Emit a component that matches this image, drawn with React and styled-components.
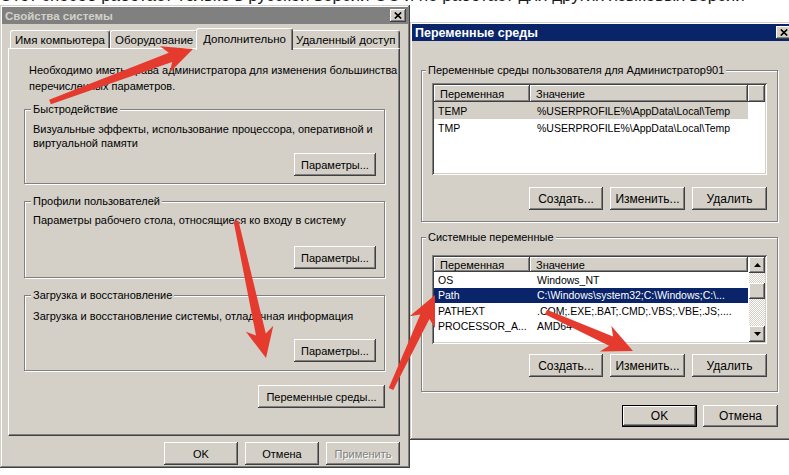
import React from 'react';
import styled, { createGlobalStyle, css } from 'styled-components';

const FACE = '#d4d0c8';

const GlobalStyle = createGlobalStyle`
  html, body { margin: 0; padding: 0; background: #fff; }
  body {
    font-family: "Liberation Sans", Arial, sans-serif;
    font-size: 11px;
    color: #000;
  }
  * { box-sizing: border-box; }
`;

const raised = css`
  box-shadow: inset -1px -1px #404040, inset 1px 1px #fff,
    inset -2px -2px #808080, inset 2px 2px ${FACE};
`;

const sunken = css`
  box-shadow: inset 1px 1px #808080, inset -1px -1px #fff,
    inset 2px 2px #404040, inset -2px -2px ${FACE};
`;

const Desktop = styled.div`
  position: relative;
  width: 789px;
  height: 475px;
  overflow: hidden;
  background: #fff;
`;

const Caption = styled.div`
  position: absolute;
  left: 0;
  top: -14px;
  font-size: 17px;
  line-height: 20px;
  white-space: nowrap;
  color: #1a1a1a;
`;

const Window = styled.div`
  position: absolute;
  z-index: ${(p) => p.$z};
  left: ${(p) => p.$x}px;
  top: ${(p) => p.$y}px;
  width: ${(p) => p.$w}px;
  height: ${(p) => p.$h}px;
  background: ${FACE};
  padding: 2px;
  display: flex;
  flex-direction: column;
  font-size: ${(p) => p.$fs}px;
  box-shadow: inset -1px -1px #404040, inset 1px 1px ${FACE},
    inset -2px -2px #808080, inset 2px 2px #fff;
`;

const TitleBar = styled.div`
  height: 17px;
  flex-shrink: 0;
  display: flex;
  align-items: center;
  justify-content: space-between;
  padding: 0 2px 0 3px;
  background: ${(p) => (p.$active ? '#0a246a' : '#808080')};
  color: ${(p) => (p.$active ? '#fff' : FACE)};
  font-weight: bold;
  font-size: ${(p) => (p.$active ? 12.5 : 11.5)}px;
  white-space: nowrap;
`;

const CloseBtn = styled.div`
  width: 16px;
  height: 13px;
  background: ${FACE};
  display: flex;
  align-items: center;
  justify-content: center;
  ${raised};
`;

const CloseIcon = () => (
  <svg width="8" height="7" viewBox="0 0 8 7">
    <path d="M0.8 0.5 L7.2 6.5 M7.2 0.5 L0.8 6.5" stroke="#000" strokeWidth="1.7" />
  </svg>
);

const WinBody = styled.div`
  flex: 1;
  display: flex;
  flex-direction: column;
  padding: ${(p) => p.$pad};
`;

/* ---------- tabs ---------- */

const TabRow = styled.div`
  display: flex;
  align-items: flex-end;
  height: 20px;
  padding-left: 2px;
  position: relative;
  z-index: 1;
`;

const Tab = styled.div`
  height: ${(p) => (p.$active ? 22 : 18)}px;
  margin: 0 ${(p) => (p.$active ? -2 : 0)}px ${(p) => (p.$active ? -2 : 0)}px;
  padding: ${(p) => (p.$active ? '3px 6px 0' : '2px 4px 0')};
  background: ${FACE};
  border-top: 1px solid #fff;
  border-left: 1px solid #fff;
  border-right: 1px solid #404040;
  box-shadow: inset -1px 0 #808080;
  border-radius: 3px 3px 0 0;
  font-size: 11.5px;
  line-height: 15px;
  white-space: nowrap;
  position: relative;
  z-index: ${(p) => (p.$active ? 2 : 1)};
`;

const TabPanel = styled.div`
  height: 388px;
  flex-shrink: 0;
  background: ${FACE};
  border-top: 1px solid #fff;
  border-left: 1px solid #fff;
  border-right: 1px solid #404040;
  border-bottom: 1px solid #404040;
  box-shadow: inset -1px -1px #808080;
  padding: 13px 14px 0 15px;
  display: flex;
  flex-direction: column;
`;

const Intro = styled.p`
  margin: 0 0 0 5px;
  line-height: 16px;
  white-space: nowrap;
`;

/* ---------- group boxes ---------- */

const Group = styled.div`
  position: relative;
  height: ${(p) => p.$h}px;
  margin-top: ${(p) => p.$mt}px;
  border: 1px solid #808080;
  box-shadow: inset 1px 1px #fff, 1px 1px #fff;
  padding: ${(p) => p.$pad};
  display: flex;
  flex-direction: column;
  flex-shrink: 0;
`;

const Legend = styled.span`
  position: absolute;
  top: -8px;
  left: ${(p) => p.$left || 6}px;
  padding: 0 2px;
  background: ${FACE};
  line-height: 14px;
  white-space: nowrap;
`;

const GroupText = styled.p`
  margin: 0;
  line-height: 14px;
  white-space: nowrap;
`;

const ButtonRow = styled.div`
  display: flex;
  justify-content: flex-end;
  gap: ${(p) => p.$gap || 7}px;
  margin-top: ${(p) => (p.$mt == null ? 'auto' : `${p.$mt}px`)};
  flex-shrink: 0;
`;

const Button = styled.button`
  width: ${(p) => p.$w || 74}px;
  height: ${(p) => p.$h || 23}px;
  padding: 0;
  border: none;
  background: ${FACE};
  font: inherit;
  font-size: ${(p) => p.$fs || 11}px;
  white-space: nowrap;
  color: ${(p) => (p.disabled ? '#808080' : '#000')};
  text-shadow: ${(p) => (p.disabled ? '1px 1px #fff' : 'none')};
  ${raised};
  ${(p) =>
    p.$default &&
    css`
      box-shadow: inset 0 0 0 1px #000, inset -2px -2px #404040,
        inset 2px 2px #fff, inset -3px -3px #808080;
    `}
`;

/* ---------- list views ---------- */

const ListView = styled.div`
  height: ${(p) => p.$h}px;
  background: #fff;
  padding: 2px;
  display: flex;
  overflow: hidden;
  flex-shrink: 0;
  font-size: 10.5px;
  ${sunken};
`;

const ListBody = styled.div`
  flex: 1;
  display: flex;
  flex-direction: column;
  overflow: hidden;
`;

const HeaderRow = styled.div`
  display: flex;
  height: ${(p) => p.$h}px;
  flex-shrink: 0;
  font-size: 11px;
`;

const HeaderCell = styled.div`
  width: ${(p) => p.$w}px;
  flex: ${(p) => (p.$grow ? 1 : 'none')};
  background: ${FACE};
  padding-left: 6px;
  display: flex;
  align-items: center;
  white-space: nowrap;
  ${raised};
`;

const Row = styled.div`
  display: flex;
  height: ${(p) => p.$h}px;
  flex-shrink: 0;
  width: 314px;
  align-items: center;
  background: ${(p) =>
    p.$sel === 'active' ? '#0a246a' : p.$sel === 'inactive' ? FACE : 'transparent'};
  color: ${(p) => (p.$sel === 'active' ? '#fff' : '#000')};
`;

const Cell = styled.div`
  width: ${(p) => p.$w}px;
  padding-left: ${(p) => p.$pl}px;
  white-space: nowrap;
  overflow: hidden;
`;

const ScrollBar = styled.div`
  width: 16px;
  flex-shrink: 0;
  display: flex;
  flex-direction: column;
  justify-content: space-between;
  background: repeating-conic-gradient(${FACE} 0 25%, #fff 0 50%) 0 0 / 2px 2px;
`;

const ScrollTop = styled.div`
  display: flex;
  flex-direction: column;
  gap: 10px;
`;

const ScrollBtn = styled.div`
  height: ${(p) => p.$h || 16}px;
  background: ${FACE};
  display: flex;
  align-items: center;
  justify-content: center;
  flex-shrink: 0;
  ${raised};
`;

const Arrow = ({ down }) => (
  <svg width="7" height="4" viewBox="0 0 7 4">
    <path d={down ? 'M0 0h7L3.5 4z' : 'M3.5 0L7 4H0z'} fill="#000" />
  </svg>
);

const FooterRow = styled.div`
  display: flex;
  justify-content: flex-end;
  gap: ${(p) => p.$gap}px;
  margin-top: ${(p) => p.$mt}px;
`;

/* ---------- annotation arrows ---------- */

const Overlay = styled.svg`
  position: absolute;
  z-index: 5;
  left: 0;
  top: 0;
  pointer-events: none;
`;

function arrowPoints([x1, y1, x2, y2], tail = 2.5, shaft = 5, headL = 30, headW = 14) {
  const dx = x2 - x1;
  const dy = y2 - y1;
  const len = Math.hypot(dx, dy);
  const ux = dx / len;
  const uy = dy / len;
  const nx = -uy;
  const ny = ux;
  const bx = x2 - ux * headL;
  const by = y2 - uy * headL;
  const sx = x2 - ux * (headL - 6);
  const sy = y2 - uy * (headL - 6);
  const pts = [
    [x1 + nx * tail, y1 + ny * tail],
    [sx + nx * shaft, sy + ny * shaft],
    [bx + nx * headW, by + ny * headW],
    [x2, y2],
    [bx - nx * headW, by - ny * headW],
    [sx - nx * shaft, sy - ny * shaft],
    [x1 - nx * tail, y1 - ny * tail],
  ];
  return pts.map((p) => p.map((v) => v.toFixed(1)).join(',')).join(' ');
}

const arrows = [
  [50, 102, 193, 49],
  [236, 221, 266, 358],
  [391, 389, 435, 295],
  [546, 312, 633, 351],
];

const userVars = [
  { name: 'TEMP', value: '%USERPROFILE%\\AppData\\Local\\Temp', sel: 'inactive' },
  { name: 'TMP', value: '%USERPROFILE%\\AppData\\Local\\Temp' },
];

const sysVars = [
  { name: 'OS', value: 'Windows_NT' },
  { name: 'Path', value: 'C:\\Windows\\system32;C:\\Windows;C:\\...', sel: 'active' },
  { name: 'PATHEXT', value: '.COM;.EXE;.BAT;.CMD;.VBS;.VBE;.JS;....' },
  { name: 'PROCESSOR_A...', value: 'AMD64' },
];

const VarRows = ({ rows, h }) =>
  rows.map((r) => (
    <Row key={r.name} $h={h} $sel={r.sel}>
      <Cell $w={96} $pl={4}>{r.name}</Cell>
      <Cell $w={218} $pl={7}>{r.value}</Cell>
    </Row>
  ));

const SystemProperties = () => (
  <Window $z={1} $x={0} $y={5} $w={410} $h={463} $fs={11}>
    <TitleBar>
      <span>Свойства системы</span>
      <CloseBtn>
        <CloseIcon />
      </CloseBtn>
    </TitleBar>
    <WinBody $pad="4px 8px 0 6px">
      <TabRow>
        <Tab>Имя компьютера</Tab>
        <Tab>Оборудование</Tab>
        <Tab $active>Дополнительно</Tab>
        <Tab>Удаленный доступ</Tab>
      </TabRow>
      <TabPanel>
        <Intro>
          Необходимо иметь права администратора для изменения большинства
          <br />
          перечисленных параметров.
        </Intro>
        <Group $h={75} $mt={15} $pad="12px 8px 7px 8px">
          <Legend>Быстродействие</Legend>
          <GroupText>
            Визуальные эффекты, использование процессора, оперативной и
            <br />
            виртуальной памяти
          </GroupText>
          <ButtonRow>
            <Button $w={82}>Параметры...</Button>
          </ButtonRow>
        </Group>
        <Group $h={77} $mt={17} $pad="11px 8px 8px 8px">
          <Legend>Профили пользователей</Legend>
          <GroupText>Параметры рабочего стола, относящиеся ко входу в систему</GroupText>
          <ButtonRow>
            <Button $w={82}>Параметры...</Button>
          </ButtonRow>
        </Group>
        <Group $h={76} $mt={17} $pad="13px 8px 8px 8px">
          <Legend>Загрузка и восстановление</Legend>
          <GroupText>Загрузка и восстановление системы, отладочная информация</GroupText>
          <ButtonRow>
            <Button $w={82}>Параметры...</Button>
          </ButtonRow>
        </Group>
        <ButtonRow $mt={14}>
          <Button $w={127}>Переменные среды...</Button>
        </ButtonRow>
      </TabPanel>
      <FooterRow $gap={7} $mt={6}>
        <Button $w={74}>OK</Button>
        <Button $w={74}>Отмена</Button>
        <Button $w={74} disabled>
          Применить
        </Button>
      </FooterRow>
    </WinBody>
  </Window>
);

const EnvironmentVariables = () => (
  <Window $z={2} $x={410} $y={22} $w={386} $h={418} $fs={11}>
    <TitleBar $active>
      <span>Переменные среды</span>
      <CloseBtn>
        <CloseIcon />
      </CloseBtn>
    </TitleBar>
    <WinBody $pad="29px 16px 0 9px">
      <Group $h={152} $mt={0} $pad="12px 10px 12px 10px">
        <Legend $left={4}>Переменные среды пользователя для Администратор901</Legend>
        <ListView $h={92}>
          <ListBody>
            <HeaderRow $h={17}>
              <HeaderCell $w={96}>Переменная</HeaderCell>
              <HeaderCell $w={218}>Значение</HeaderCell>
              <HeaderCell $grow />
            </HeaderRow>
            <VarRows rows={userVars} h={17} />
          </ListBody>
        </ListView>
        <ButtonRow $mt={12}>
          <Button $fs={12}>Создать...</Button>
          <Button $fs={12} $w={75}>Изменить...</Button>
          <Button $fs={12} $w={75}>Удалить</Button>
        </ButtonRow>
      </Group>
      <Group $h={155} $mt={15} $pad="17px 10px 15px 10px">
        <Legend $left={4}>Системные переменные</Legend>
        <ListView $h={89}>
          <ListBody>
            <HeaderRow $h={15}>
              <HeaderCell $w={96}>Переменная</HeaderCell>
              <HeaderCell $w={218}>Значение</HeaderCell>
            </HeaderRow>
            <VarRows rows={sysVars} h={15.5} />
          </ListBody>
          <ScrollBar>
            <ScrollTop>
              <ScrollBtn>
                <Arrow />
              </ScrollBtn>
              <ScrollBtn $h={16} />
            </ScrollTop>
            <ScrollBtn>
              <Arrow down />
            </ScrollBtn>
          </ScrollBar>
        </ListView>
        <ButtonRow $mt={10}>
          <Button $fs={12}>Создать...</Button>
          <Button $fs={12} $w={75}>Изменить...</Button>
          <Button $fs={12} $w={75}>Удалить</Button>
        </ButtonRow>
      </Group>
      <FooterRow $gap={6} $mt={13}>
        <Button $fs={12} $w={75} $h={22} $default>OK</Button>
        <Button $fs={12} $w={75} $h={22}>Отмена</Button>
      </FooterRow>
    </WinBody>
  </Window>
);

export default function App() {
  return (
    <>
      <GlobalStyle />
      <Desktop>
        <Caption>
          Этот способ работает только в русской версии ОС и не работает для других языковых версий
        </Caption>
        <SystemProperties />
        <EnvironmentVariables />
        <Overlay width="789" height="475" viewBox="0 0 789 475">
          {arrows.map((a, i) => (
            <polygon key={i} points={arrowPoints(a)} fill="#e53b2f" />
          ))}
        </Overlay>
      </Desktop>
    </>
  );
}
